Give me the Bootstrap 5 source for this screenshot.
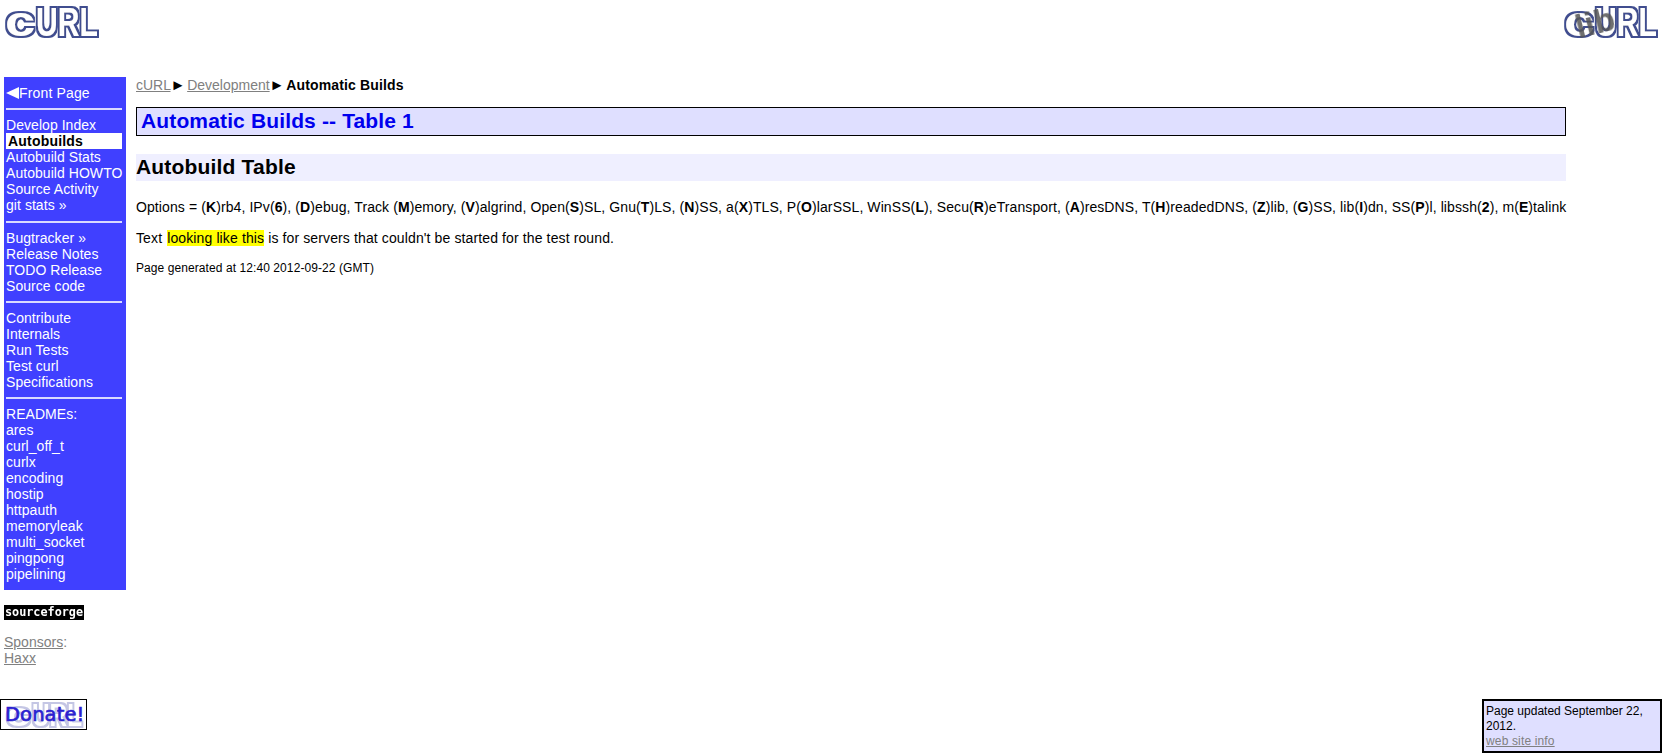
<!DOCTYPE html>
<html lang="en"><head><meta charset="utf-8"><title>cURL - Automatic Builds</title>
<link href="https://cdn.jsdelivr.net/npm/bootstrap@5.3.0/dist/css/bootstrap.min.css" rel="stylesheet">
<style>
html,body{height:756px;overflow:hidden}
body{font-family:"Liberation Sans",Arial,sans-serif;font-size:14px;line-height:16px;color:#000;background:#fff}
a.plainlink{color:#808080;text-decoration:underline}
.topbar{height:77px}
.logo-txt{font-family:"Liberation Sans",Arial,sans-serif;font-weight:700;fill:#000}
.lib-txt{font-family:"Liberation Sans",Arial,sans-serif;font-weight:700;fill:#555;fill-opacity:.85}
.sidenav{width:122px;margin-left:4px;background:#4040ff;padding:8px 4px 8px 2px;color:#fff;letter-spacing:.05px}
.sidenav a{display:block;color:#fff;text-decoration:none;height:16px;white-space:nowrap}
.sidenav a.cur{background:#fff;color:#000;font-weight:700;padding-left:2px;letter-spacing:.2px}
.sidenav a.front{letter-spacing:.15px}
.sidenav .cap{display:block;height:16px}
.sidenav hr{margin:7px 0;border:0;border-top:2px solid #d9d9ff;opacity:1}
.sidenav hr.wide{margin-top:8px}
.sidenav .arrow{display:inline-block;width:0;height:0;border:6px solid transparent;border-right:13px solid #fff;border-left:0;vertical-align:-1px}
.leftcol{width:126px}
.mainpane{width:1430px;margin-left:10px}
.crumb{height:16px;margin-bottom:14px;white-space:nowrap}
.crumb b{letter-spacing:.14px}
.sep{font-size:15px;margin-left:-4px;margin-right:-2px}
.pagehead{height:29px;border:1px solid #000;background:#dfdfff;color:#0000ee;font-size:21px;font-weight:700;line-height:26px;padding-left:4px;margin-bottom:18px;letter-spacing:.14px}
.subhead{height:27px;background:#efefff;font-size:21px;font-weight:700;line-height:26px;margin-bottom:18px;letter-spacing:.18px}
.opts{margin:0 0 15px;white-space:nowrap;height:16px;letter-spacing:.095px}
.opts.note{letter-spacing:.12px}
.buildbad{background:#ff0;margin-left:1px}
.stamp{font-size:12px;margin:-1px 0 0;letter-spacing:.08px}
.sfbadge{display:block;width:80px;height:15px;margin:15px 0 14px 4px;background:#000;color:#fff;font-family:"DejaVu Sans Mono",monospace;font-weight:700;font-size:11.8px;line-height:15px;text-align:center}
.sfbadge span{display:inline-block;transform:scaleY(1.1)}
.sponsorbox{margin-left:4px;color:#808080;line-height:16px}
.foot{position:absolute;left:0;right:0;top:699px;align-items:flex-start}
.donate{width:87px;height:31px;border:1px solid #000;background:#fff;position:relative;overflow:hidden}
.donate svg{position:absolute;left:0;top:0}
.donate-label{position:absolute;left:4px;top:0;color:#2a1fd0;font-family:"DejaVu Sans",sans-serif;font-size:19.5px;line-height:29px;white-space:nowrap;-webkit-text-stroke:.7px #2a1fd0;letter-spacing:.1px}
.updated{width:180px;height:54px;margin-right:5px;border:2px solid #000;background:#dfdfff;font-size:12px;line-height:15px;padding:3px 2px 0 2px}
.updated a{letter-spacing:.15px}
</style></head><body>
<svg width="0" height="0" class="position-absolute" aria-hidden="true">
 <defs>
  <filter id="outlineBlue" x="-10%" y="-20%" width="120%" height="140%">
   <feMorphology in="SourceAlpha" operator="dilate" radius="2" result="outer"/>
   <feFlood flood-color="#3f4d8f"/><feComposite in2="outer" operator="in" result="edge"/>
   <feFlood flood-color="#ffffff"/><feComposite in2="SourceAlpha" operator="in" result="fillw"/>
   <feMerge><feMergeNode in="edge"/><feMergeNode in="fillw"/></feMerge>
   <feGaussianBlur stdDeviation=".35"/>
  </filter>
  <filter id="outlinePale" x="-10%" y="-20%" width="120%" height="140%">
   <feMorphology in="SourceAlpha" operator="dilate" radius="2" result="outer"/>
   <feFlood flood-color="#c4c6e4"/><feComposite in2="outer" operator="in" result="edge"/>
   <feFlood flood-color="#ffffff"/><feComposite in2="SourceAlpha" operator="in" result="fillw"/>
   <feMerge><feMergeNode in="edge"/><feMergeNode in="fillw"/></feMerge>
   <feGaussianBlur stdDeviation=".5"/>
  </filter>
  <filter id="softLib"><feGaussianBlur stdDeviation=".6"/></filter>
 </defs>
</svg>
<div class="topbar d-flex justify-content-between">
 <svg width="108" height="44" viewBox="0 0 108 44" aria-hidden="true"><g filter="url(#outlineBlue)"><text transform="translate(5 36) scale(1.3 1)" class="logo-txt" font-size="42">c</text><text x="36" y="36" class="logo-txt" font-size="40" textLength="62" lengthAdjust="spacingAndGlyphs">URL</text></g></svg>
 <svg width="108" height="44" viewBox="0 0 108 44" aria-hidden="true"><g filter="url(#outlineBlue)"><text transform="translate(5 36) scale(1.3 1)" class="logo-txt" font-size="42">c</text><text x="36" y="36" class="logo-txt" font-size="40" textLength="62" lengthAdjust="spacingAndGlyphs">URL</text></g><text x="16" y="34" class="lib-txt" font-size="34" filter="url(#softLib)" transform="rotate(-14 36 22)">lib</text></svg>
</div>
<div class="d-flex">
 <div class="leftcol">
  <nav class="sidenav">
   <a href="#" class="front"><span class="arrow"></span>Front Page</a>
   <hr>
   <a href="#">Develop Index</a>
   <a href="#" class="cur">Autobuilds</a>
   <a href="#">Autobuild Stats</a>
   <a href="#">Autobuild HOWTO</a>
   <a href="#">Source Activity</a>
   <a href="#">git stats »</a>
   <hr class="wide">
   <a href="#">Bugtracker »</a>
   <a href="#">Release Notes</a>
   <a href="#">TODO Release</a>
   <a href="#">Source code</a>
   <hr>
   <a href="#">Contribute</a>
   <a href="#">Internals</a>
   <a href="#">Run Tests</a>
   <a href="#">Test curl</a>
   <a href="#">Specifications</a>
   <hr>
   <span class="cap">READMEs:</span>
   <a href="#">ares</a>
   <a href="#">curl_off_t</a>
   <a href="#">curlx</a>
   <a href="#">encoding</a>
   <a href="#">hostip</a>
   <a href="#">httpauth</a>
   <a href="#">memoryleak</a>
   <a href="#">multi_socket</a>
   <a href="#">pingpong</a>
   <a href="#">pipelining</a>
  </nav>
  <a href="#" class="sfbadge text-decoration-none"><span>sourceforge</span></a>
  <div class="sponsorbox"><a href="#" class="plainlink">Sponsors</a>:<br><a href="#" class="plainlink">Haxx</a></div>
 </div>
 <main class="mainpane">
  <div class="crumb"><a href="#" class="plainlink">cURL</a> <span class="sep">►</span> <a href="#" class="plainlink">Development</a> <span class="sep">►</span> <b>Automatic Builds</b></div>
  <div class="pagehead">Automatic Builds -- Table 1</div>
  <div class="subhead">Autobuild Table</div>
  <p class="opts">Options = (<b>K</b>)rb4, IPv(<b>6</b>), (<b>D</b>)ebug, Track (<b>M</b>)emory, (<b>V</b>)algrind, Open(<b>S</b>)SL, Gnu(<b>T</b>)LS, (<b>N</b>)SS, a(<b>X</b>)TLS, P(<b>O</b>)larSSL, WinSS(<b>L</b>), Secu(<b>R</b>)eTransport, (<b>A</b>)resDNS, T(<b>H</b>)readedDNS, (<b>Z</b>)lib, (<b>G</b>)SS, lib(<b>I</b>)dn, SS(<b>P</b>)l, libssh(<b>2</b>), m(<b>E</b>)talink</p>
  <p class="opts note">Text <span class="buildbad">looking like this</span> is for servers that couldn't be started for the test round.</p>
  <p class="stamp">Page generated at 12:40 2012-09-22 (GMT)</p>
 </main>
</div>
<div class="foot d-flex justify-content-between">
 <a href="#" class="donate text-decoration-none d-block">
  <svg width="85" height="29" viewBox="0 0 85 29" aria-hidden="true"><g filter="url(#outlinePale)"><text transform="translate(5 26) scale(1.3 1)" class="logo-txt" font-size="34">c</text><text x="31" y="26" class="logo-txt" font-size="32" textLength="50" lengthAdjust="spacingAndGlyphs">URL</text></g></svg>
  <span class="donate-label">Donate!</span>
 </a>
 <div class="updated">Page updated September 22, 2012.<br><a href="#" class="plainlink">web site info</a></div>
</div>
<script src="https://cdn.jsdelivr.net/npm/bootstrap@5.3.0/dist/js/bootstrap.bundle.min.js"></script>
</body></html>
